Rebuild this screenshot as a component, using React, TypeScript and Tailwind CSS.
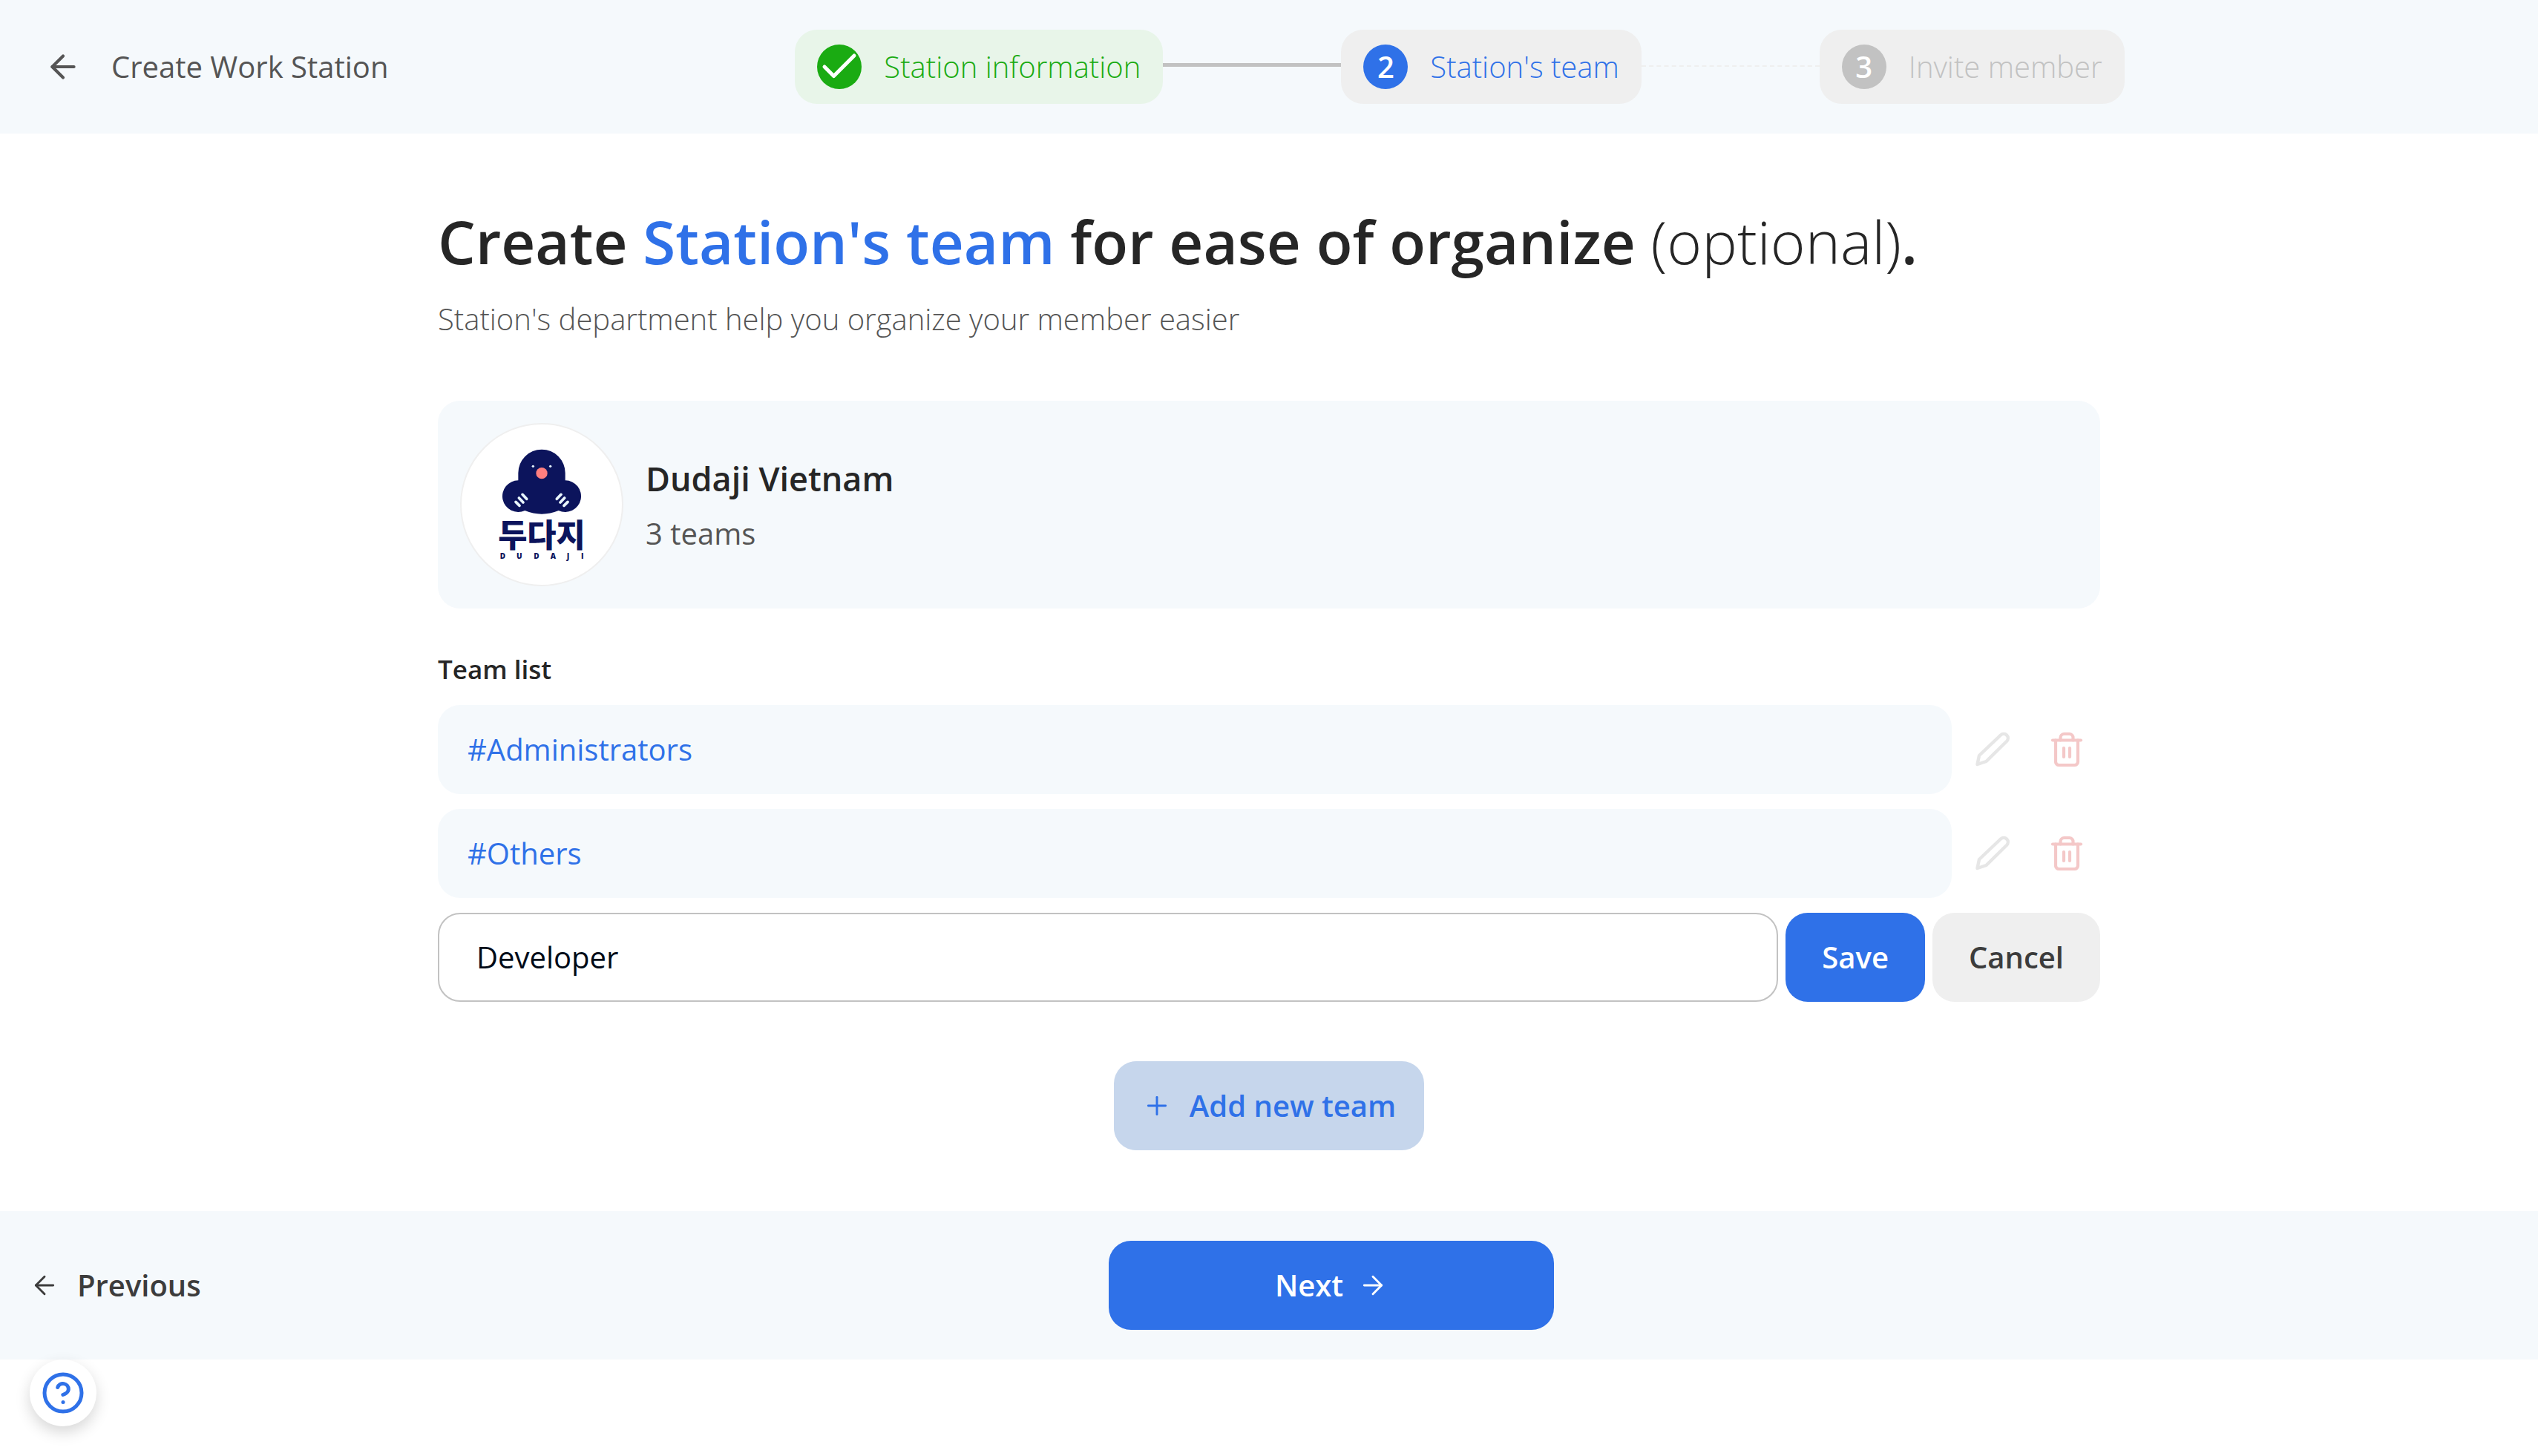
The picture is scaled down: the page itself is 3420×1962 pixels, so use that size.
import React, { useState } from "react";
import { ArrowLeft, ArrowRight, Plus } from "lucide-react";

function Logo() {
  return (
    <svg viewBox="36 36 648 648" className="size-full" role="img" aria-label="Dudaji">
      <path
        d="M265 262V232A95 95 0 0 1 455 232V262A64 64 0 1 1 428 384Q360 412 292 384A64 64 0 1 1 265 262Z"
        fill="#0c145c"
      />
      <circle cx="325" cy="205" r="5" fill="#e3f1fb" />
      <circle cx="395" cy="205" r="5" fill="#e3f1fb" />
      <circle cx="360" cy="233" r="23" fill="#ff7f7f" />
      <g stroke="#e9f6fd" strokeWidth="11" strokeLinecap="round">
        <path d="M255 349l15 15M268 333l17 18M282 319l17 18" />
        <path d="M465 349l-15 15M452 333l-17 18M438 319l-17 18" />
      </g>
      <text
        x="360"
        y="530"
        textAnchor="middle"
        fontSize="128"
        fontWeight="900"
        fill="#0c145c"
        fontFamily="'Noto Sans CJK KR', sans-serif"
      >
        두다지
      </text>
      <text
        x="191 258 328 395 461 519"
        y="580"
        fontSize="30"
        fontWeight="800"
        fill="#0c145c"
        fontFamily="'Open Sans', sans-serif"
      >
        DUDAJI
      </text>
    </svg>
  );
}

function CheckBadge() {
  return (
    <svg viewBox="0 0 60 60" className="size-[60px]" aria-hidden="true">
      <circle cx="30" cy="30" r="30" fill="#1aab12" />
      <path
        d="M10 30l12.5 12.5L50 15"
        fill="none"
        stroke="#fff"
        strokeWidth="5"
        strokeLinecap="round"
        strokeLinejoin="round"
      />
    </svg>
  );
}

function PencilIcon() {
  return (
    <svg
      viewBox="0 0 50 50"
      className="size-[50px]"
      fill="none"
      stroke="currentColor"
      strokeWidth="4.4"
      strokeLinecap="round"
      strokeLinejoin="round"
      aria-hidden="true"
    >
      <path d="M36 5.5a5.8 5.8 0 0 1 8.2 8.2L16.5 41L4.5 45L7 33Z" />
    </svg>
  );
}

function TrashIcon() {
  return (
    <svg
      viewBox="0 0 50 50"
      className="size-[50px]"
      fill="none"
      stroke="currentColor"
      strokeWidth="4.2"
      strokeLinecap="round"
      strokeLinejoin="round"
      aria-hidden="true"
    >
      <path d="M6 12.5H44" />
      <path d="M10 12.5V41.5a4.5 4.5 0 0 0 4.5 4.5H35.5a4.5 4.5 0 0 0 4.5-4.5V12.5" />
      <path d="M16.5 12.5V9a5 5 0 0 1 5-5h7a5 5 0 0 1 5 5V12.5" />
      <path d="M21 23V35M29 23V35" />
    </svg>
  );
}

function HelpIcon() {
  return (
    <svg
      viewBox="0 0 24 24"
      className="size-[60px]"
      fill="none"
      stroke="currentColor"
      strokeWidth="2"
      strokeLinecap="round"
      strokeLinejoin="round"
      aria-hidden="true"
    >
      <circle cx="12" cy="12" r="10" />
      <path d="M9.090 9a3 3 0 0 1 5.830 1c0 2-3 3-3 3" />
      <path d="M12 17h.01" />
    </svg>
  );
}

function StepNumber({ value, tone }: { value: number; tone: string }) {
  return (
    <span
      className={`flex size-[60px] items-center justify-center rounded-full font-semibold text-white ${tone}`}
    >
      {value}
    </span>
  );
}

function Step({
  badge,
  label,
  tone,
}: {
  badge: React.ReactNode;
  label: string;
  tone: string;
}) {
  return (
    <li className={`flex h-[100px] items-center gap-[30px] rounded-[30px] px-[30px] font-light ${tone}`}>
      {badge}
      <span className="whitespace-nowrap">{label}</span>
    </li>
  );
}

function TeamRow({ name }: { name: string }) {
  return (
    <li className="flex h-[120px] items-center gap-[10px]">
      <div className="flex h-full flex-1 items-center rounded-[30px] bg-[#f5f9fc] px-10 text-[#2f71e8]">
        #{name}
      </div>
      <button type="button" disabled aria-label={`Edit ${name}`} className="p-5 text-[#e6e6e6]">
        <PencilIcon />
      </button>
      <button type="button" disabled aria-label={`Delete ${name}`} className="p-5 text-[#f4c8c8]">
        <TrashIcon />
      </button>
    </li>
  );
}

const teams = ["Administrators", "Others"];

export default function App() {
  const [draft, setDraft] = useState("Developer");

  return (
    <div className="min-h-screen bg-white font-['Open_Sans',sans-serif] text-[40px] leading-[60px] text-[#262626]">
      <header className="flex h-[180px] items-center bg-[#f5f9fc] pr-[26px]">
        <div className="flex w-[540px] items-center gap-10 pl-[60px] text-[#555]">
          <button type="button" aria-label="Back">
            <ArrowLeft size={50} strokeWidth={2} />
          </button>
          <span className="whitespace-nowrap">Create Work Station</span>
        </div>
        <ol className="flex flex-1 items-center justify-center">
          <Step badge={<CheckBadge />} label="Station information" tone="bg-[#e8f5e9] text-[#1aab12]" />
          <li aria-hidden="true" className="mb-[5px] w-60 border-t-[5px] border-[#c2c2c2]" />
          <Step
            badge={<StepNumber value={2} tone="bg-[#2f71e8]" />}
            label="Station's team"
            tone="bg-[#efefef] text-[#2f71e8]"
          />
          <li aria-hidden="true" className="mb-[2px] w-60 border-t-2 border-dashed border-[#efefef]" />
          <Step
            badge={<StepNumber value={3} tone="bg-[#c2c2c2]" />}
            label="Invite member"
            tone="bg-[#efefef] text-[#c2c2c2]"
          />
        </ol>
      </header>

      <main className="mx-auto w-[2240px] max-w-full pt-[90px] pb-[82px]">
        <h1 className="text-[80px] leading-[110px] font-semibold">
          Create <span className="text-[#2f71e8]">Station's team</span> for ease of organize{" "}
          <span className="font-light">(optional)</span>.
        </h1>
        <p className="mt-5 font-light text-[#555]">Station's department help you organize your member easier</p>

        <section className="mt-20 flex items-center gap-[30px] rounded-[30px] bg-[#f5f9fc] p-[30px]">
          <div className="size-[220px] overflow-hidden rounded-full border-2 border-[#efefef] bg-white">
            <Logo />
          </div>
          <div className="flex flex-col gap-[14px] pt-1">
            <h2 className="text-[45px] font-semibold">Dudaji Vietnam</h2>
            <p className="text-[#555]">3 teams</p>
          </div>
        </section>

        <h3 className="mt-[57px] text-[35px] leading-[50px] font-semibold">Team list</h3>
        <ul className="mt-[23px] flex flex-col gap-5">
          {teams.map((name) => (
            <TeamRow key={name} name={name} />
          ))}
        </ul>

        <form className="mt-5 flex h-[120px] gap-[10px]" onSubmit={(e) => e.preventDefault()}>
          <input
            type="text"
            aria-label="Team name"
            value={draft}
            onChange={(e) => setDraft(e.target.value)}
            className="min-w-0 flex-1 rounded-[30px] border-2 border-[#c2c2c2] px-[50px] text-[#000b18] outline-none"
          />
          <button type="submit" className="rounded-[30px] bg-[#2f71e8] px-[49px] font-semibold text-white">
            Save
          </button>
          <button type="button" className="rounded-[30px] bg-[#efefef] px-[49px] font-semibold text-[#3c3c3c]">
            Cancel
          </button>
        </form>

        <button
          type="button"
          className="mx-auto mt-20 flex h-[120px] items-center gap-6 rounded-[30px] bg-[#c6d6ec] px-[38px] font-semibold text-[#2f71e8]"
        >
          <Plus size={40} strokeWidth={1.75} />
          Add new team
        </button>
      </main>

      <footer className="flex h-[200px] items-center bg-[#f5f9fc] pr-[130px] font-semibold">
        <div className="w-[298px] pl-10">
          <button type="button" className="flex items-center gap-6 text-[#3c3c3c]">
            <ArrowLeft size={40} strokeWidth={1.75} />
            Previous
          </button>
        </div>
        <div className="flex flex-1 justify-center">
          <button
            type="button"
            className="flex h-[120px] w-[600px] items-center justify-center gap-5 rounded-[30px] bg-[#2f71e8] text-white"
          >
            Next
            <ArrowRight size={40} strokeWidth={1.75} />
          </button>
        </div>
      </footer>

      <button
        type="button"
        aria-label="Help"
        className="fixed bottom-10 left-10 flex size-[90px] items-center justify-center rounded-full bg-white text-[#2f71e8] shadow-[0_8px_20px_rgba(0,0,0,0.16)]"
      >
        <HelpIcon />
      </button>
    </div>
  );
}
